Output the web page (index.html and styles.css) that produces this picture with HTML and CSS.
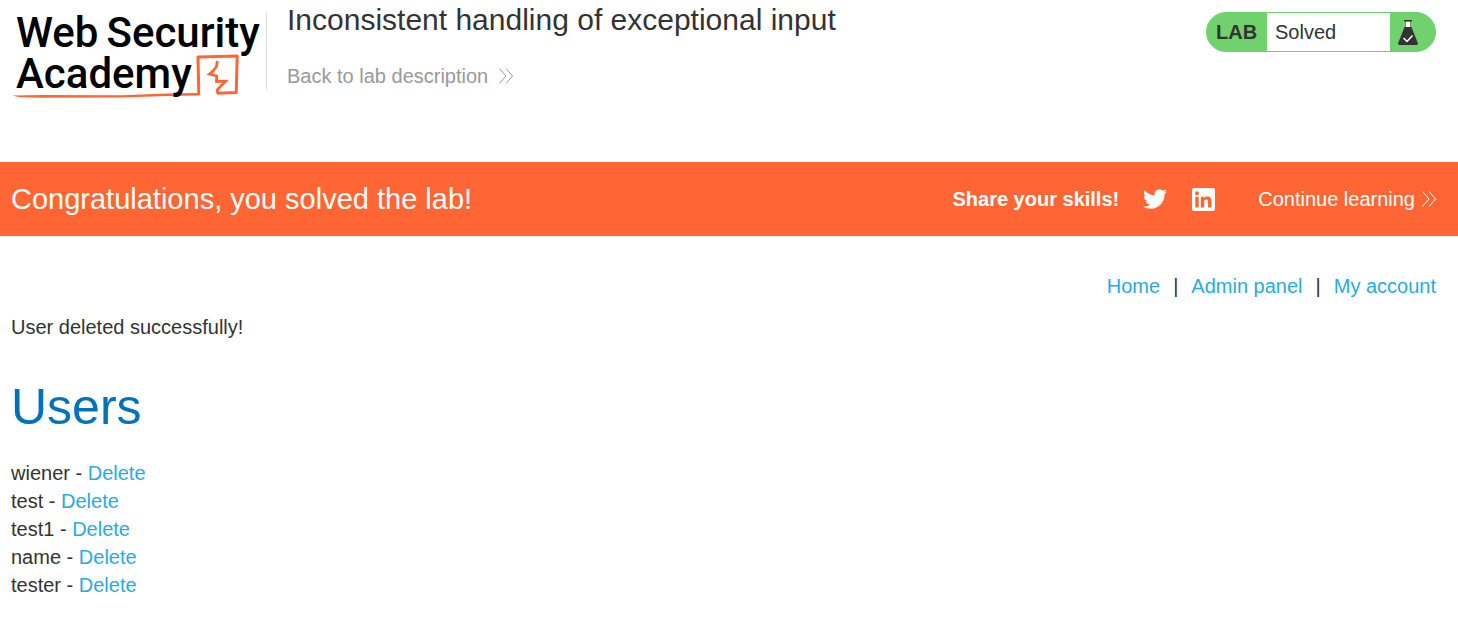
FILE: index.html
```html
<!DOCTYPE html>
<html lang="en">
<head>
<meta charset="utf-8">
<meta name="viewport" content="width=device-width, initial-scale=1">
<title>Inconsistent handling of exceptional input</title>
<link rel="stylesheet" href="styles.css">
</head>
<body>
<header class="lab-header">
  <a class="logo" href="#" aria-label="Web Security Academy">
    <svg class="logo-mark" viewBox="0 0 250 90" fill="none" stroke="#ff6633" aria-hidden="true">
      <path d="M0 83.500L30 83l80 .2 45-1.700 32-.5v2.500l-32 .5-45 1.500-80 .3-22-.5z" fill="#ff6633" stroke="none"/>
      <path d="M186.800 83L186 45L225.200 44L224.200 80.500L205 81.200" stroke-width="3" stroke-linejoin="round"/>
      <path d="M205.300 49L204.500 54.500L201 59L197.500 62L204.700 64L204.500 69.500L213.500 69.200L205.500 77.500L205.500 81.500" stroke-width="2.800"/>
    </svg>
    <span class="logo-line"><span>Web</span><span>Security</span></span>
    <span class="logo-line">Academy</span>
  </a>
  <div class="title-block">
    <h2 class="lab-title">Inconsistent handling of exceptional input</h2>
    <a class="back-link" href="#">Back to lab description
      <svg class="chevrons" viewBox="0 0 14 16" aria-hidden="true"><path d="M0.500 0.500L7 8L0.500 15.500M7 0.500L13.500 8L7 15.500"/></svg>
    </a>
  </div>
  <div class="lab-status">
    <span class="status-label">LAB</span>
    <p class="status-text">Solved</p>
    <span class="status-icon">
      <svg class="flask" viewBox="0 0 20 26" aria-hidden="true">
        <path d="M7 1.500h6V7H7z" fill="#fff"/>
        <path d="M6 0h8v1.500h-1V7h-.6V1.500H7.600V7H7V1.500H6z" fill="#333332"/>
        <path d="M6.500 7h7l6.300 16q.5 2-1.500 2H1.700q-2 0-1.500-2z" fill="#333332"/>
        <path d="M5.500 18L9 21.500L14.500 15.500" fill="none" stroke="#fff" stroke-width="1.500"/>
      </svg>
    </span>
  </div>
</header>

<section class="banner">
  <h4 class="banner-title">Congratulations, you solved the lab!</h4>
  <div class="share">
    <span class="share-label">Share your skills!</span>
    <a class="share-link" href="#" aria-label="Twitter">
      <svg viewBox="0 0 24 24" fill="#fff" aria-hidden="true"><path d="M23.950 4.570a10 10 0 0 1-2.820.77 4.960 4.960 0 0 0 2.160-2.720c-.95.55-2 .95-3.130 1.180a4.920 4.920 0 0 0-8.380 4.480C7.690 8.090 4.070 6.130 1.640 3.160a4.820 4.820 0 0 0-.67 2.480c0 1.710.87 3.210 2.190 4.100a4.900 4.900 0 0 1-2.230-.62v.06a4.920 4.920 0 0 0 3.950 4.830 5 5 0 0 1-2.210.08 4.940 4.940 0 0 0 4.600 3.420A9.870 9.870 0 0 1 0 19.540a14 14 0 0 0 7.550 2.210c9.050 0 14-7.500 14-13.980 0-.21 0-.42-.02-.63a9.940 9.940 0 0 0 2.460-2.550z"/></svg>
    </a>
    <a class="share-link" href="#" aria-label="LinkedIn">
      <svg viewBox="0 0 24 24" aria-hidden="true">
        <rect x="1" y="1" width="23" height="23" rx="2" fill="#fff"/>
        <g fill="#ff6633"><circle cx="6" cy="6.300" r="2"/><path d="M4.300 9.800h3.400v10.700H4.300zM9.800 9.800H13v1.500c.6-1 1.700-1.700 3.300-1.700 3.300 0 4.200 2.100 4.200 5v5.900h-3.400v-5.300c0-1.500-.2-2.800-1.900-2.800s-2 1.300-2 2.800v5.300H9.800z"/></g>
      </svg>
    </a>
  </div>
  <a class="continue-link" href="#">Continue learning
    <svg class="chevrons" viewBox="0 0 14 16" aria-hidden="true"><path d="M0.500 0.500L7 8L0.500 15.500M7 0.500L13.500 8L7 15.500"/></svg>
  </a>
</section>

<main class="page">
  <nav class="top-links">
    <a href="#">Home</a><span>|</span><a href="#">Admin panel</a><span>|</span><a href="#">My account</a>
  </nav>
  <p class="message">User deleted successfully!</p>
  <h1 class="heading">Users</h1>
  <ul class="users">
    <li>wiener - <a href="#">Delete</a></li>
    <li>test - <a href="#">Delete</a></li>
    <li>test1 - <a href="#">Delete</a></li>
    <li>name - <a href="#">Delete</a></li>
    <li>tester - <a href="#">Delete</a></li>
  </ul>
</main>
</body>
</html>
```
FILE: styles.css
```css
* { box-sizing: border-box; }

body {
  margin: 0;
  background: #fff;
  color: #333332;
  font: 20px/28px "Liberation Sans", Arial, sans-serif;
}

h1, h2, h4, p, ul { margin: 0; padding: 0; }
a { color: #29abe2; text-decoration: none; }
svg { display: block; }

.lab-header {
  display: flex;
  align-items: flex-start;
  padding: 12px 22px 60px 12px;
}

.logo {
  position: relative;
  width: 254px;
  height: 90px;
  padding-left: 4px;
  color: #000;
  font: 500 42px/41px Roboto, sans-serif;
}

.logo-mark {
  position: absolute;
  left: 0;
  top: 0;
  width: 250px;
  height: 90px;
}

.logo-line {
  position: relative;
  display: flex;
  gap: 8px;
}

.title-block {
  flex: 1;
  height: 78px;
  padding-left: 20px;
  border-left: 1px solid #dedede;
}

.lab-title {
  margin-top: -8px;
  font-size: 30px;
  line-height: 32px;
  font-weight: 400;
}

.back-link {
  display: inline-flex;
  align-items: center;
  gap: 11px;
  margin-top: 26px;
  color: #999;
}

.chevrons {
  width: 14px;
  height: 16px;
  fill: none;
  stroke: currentColor;
}

.lab-status {
  display: flex;
  width: 230px;
  height: 40px;
  line-height: 38px;
  border: 1px solid #70d26d;
  border-radius: 20px;
  background: #70d26d;
  overflow: hidden;
}

.status-label {
  width: 60px;
  padding-left: 9px;
  font-weight: 700;
}

.status-text {
  flex: 1;
  padding-left: 8px;
  background: #fff;
}

.status-icon {
  width: 45px;
  padding: 7px 8px;
}

.flask { width: 20px; height: 26px; }

.banner {
  display: flex;
  align-items: center;
  min-height: 74px;
  padding: 0 22px 0 11px;
  background: #ff6633;
  color: #fff;
}

.banner-title {
  flex: 1;
  font-size: 29px;
  line-height: 32px;
  font-weight: 400;
}

.share {
  display: flex;
  align-items: center;
  gap: 24px;
  margin-right: 43px;
}

.share-label { font-weight: 700; }
.share-link { width: 24px; height: 24px; }

.continue-link {
  display: flex;
  align-items: center;
  gap: 7px;
  color: #fff;
}

.page { padding: 36px 22px 24px 11px; }

.top-links {
  display: flex;
  justify-content: flex-end;
  gap: 13px;
}

.message { margin-top: 13px; }

.heading {
  margin: 36px 0 22px;
  color: #0071bc;
  font-size: 50px;
  line-height: 60px;
  font-weight: 400;
}

.users { list-style: none; }
```
